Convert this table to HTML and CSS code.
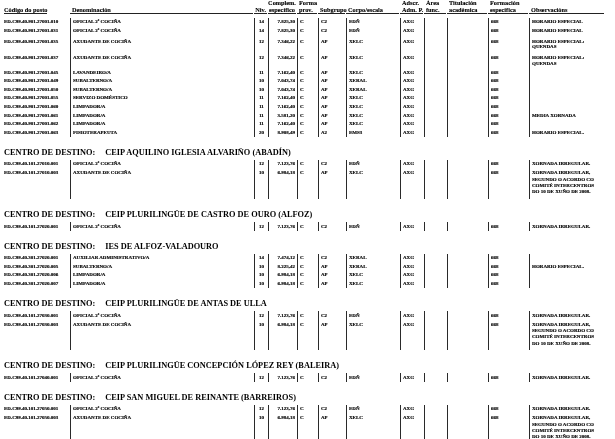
FILE: index.html
```html
<!DOCTYPE html>
<html lang="gl">
<head>
<meta charset="utf-8">
<title>Relación de postos</title>
<link rel="stylesheet" href="styles.css">
</head>
<body>
<div class="page">
  <div class="thead grid">
    <div class="th th-code">Código do posto</div>
    <div class="th">Denominación</div>
    <div class="th th-niv">Niv.</div>
    <div class="th th-center">Complem.<br>específico</div>
    <div class="th">Forma<br>prov.</div>
    <div class="th">Subgrupo</div>
    <div class="th">Corpo/escala</div>
    <div class="th">Adscr.<br>Adm. P.</div>
    <div class="th">Área<br>func.</div>
    <div class="th">Titulación<br>académica</div>
    <div class="th">Formación<br>específica</div>
    <div class="th">Observacións</div>
  </div>

  <div class="tbody">
    <div class="row grid"><div class="td">ED.C99.40.901.27001.010</div><div class="td">OFICIAL 2ª COCIÑA</div><div class="td num">14</div><div class="td amt">7.825,30</div><div class="td">C</div><div class="td">C2</div><div class="td">EDÑ</div><div class="td">AXG</div><div class="td"></div><div class="td"></div><div class="td">668</div><div class="td">HORARIO ESPECIAL</div></div>
    <div class="row grid"><div class="td">ED.C99.40.901.27001.031</div><div class="td">OFICIAL 2ª COCIÑA</div><div class="td num">14</div><div class="td amt">7.825,30</div><div class="td">C</div><div class="td">C2</div><div class="td">EDÑ</div><div class="td">AXG</div><div class="td"></div><div class="td"></div><div class="td">668</div><div class="td">HORARIO ESPECIAL</div></div>
    <div class="row grid r2"><div class="td">ED.C99.40.901.27001.035</div><div class="td">AXUDANTE DE COCIÑA</div><div class="td num">12</div><div class="td amt">7.346,22</div><div class="td">C</div><div class="td">AP</div><div class="td">XELC</div><div class="td">AXG</div><div class="td"></div><div class="td"></div><div class="td">668</div><div class="td">HORARIO ESPECIAL:<br>QUENDAS</div></div>
    <div class="row grid r2"><div class="td">ED.C99.40.901.27001.037</div><div class="td">AXUDANTE DE COCIÑA</div><div class="td num">12</div><div class="td amt">7.346,22</div><div class="td">C</div><div class="td">AP</div><div class="td">XELC</div><div class="td">AXG</div><div class="td"></div><div class="td"></div><div class="td">668</div><div class="td">HORARIO ESPECIAL:<br>QUENDAS</div></div>
    <div class="row grid"><div class="td">ED.C99.40.901.27001.045</div><div class="td">LAVANDEIRO/A</div><div class="td num">11</div><div class="td amt">7.162,40</div><div class="td">C</div><div class="td">AP</div><div class="td">XELC</div><div class="td">AXG</div><div class="td"></div><div class="td"></div><div class="td">668</div><div class="td"></div></div>
    <div class="row grid"><div class="td">ED.C99.40.901.27001.049</div><div class="td">SUBALTERNO/A</div><div class="td num">10</div><div class="td amt">7.043,74</div><div class="td">C</div><div class="td">AP</div><div class="td">XERAL</div><div class="td">AXG</div><div class="td"></div><div class="td"></div><div class="td">668</div><div class="td"></div></div>
    <div class="row grid"><div class="td">ED.C99.40.901.27001.050</div><div class="td">SUBALTERNO/A</div><div class="td num">10</div><div class="td amt">7.043,74</div><div class="td">C</div><div class="td">AP</div><div class="td">XERAL</div><div class="td">AXG</div><div class="td"></div><div class="td"></div><div class="td">668</div><div class="td"></div></div>
    <div class="row grid"><div class="td">ED.C99.40.901.27001.055</div><div class="td">SERVIZO DOMÉSTICO</div><div class="td num">11</div><div class="td amt">7.162,40</div><div class="td">C</div><div class="td">AP</div><div class="td">XELC</div><div class="td">AXG</div><div class="td"></div><div class="td"></div><div class="td">668</div><div class="td"></div></div>
    <div class="row grid"><div class="td">ED.C99.40.901.27001.060</div><div class="td">LIMPADOR/A</div><div class="td num">11</div><div class="td amt">7.162,40</div><div class="td">C</div><div class="td">AP</div><div class="td">XELC</div><div class="td">AXG</div><div class="td"></div><div class="td"></div><div class="td">668</div><div class="td"></div></div>
    <div class="row grid"><div class="td">ED.C99.40.901.27001.061</div><div class="td">LIMPADOR/A</div><div class="td num">11</div><div class="td amt">3.581,20</div><div class="td">C</div><div class="td">AP</div><div class="td">XELC</div><div class="td">AXG</div><div class="td"></div><div class="td"></div><div class="td">668</div><div class="td">MEDIA XORNADA</div></div>
    <div class="row grid"><div class="td">ED.C99.40.901.27001.062</div><div class="td">LIMPADOR/A</div><div class="td num">11</div><div class="td amt">7.162,40</div><div class="td">C</div><div class="td">AP</div><div class="td">XELC</div><div class="td">AXG</div><div class="td"></div><div class="td"></div><div class="td">668</div><div class="td"></div></div>
    <div class="row grid"><div class="td">ED.C99.40.901.27001.063</div><div class="td">FISIOTERAPEUTA</div><div class="td num">20</div><div class="td amt">8.908,49</div><div class="td">C</div><div class="td">A2</div><div class="td">EMS3</div><div class="td">AXG</div><div class="td"></div><div class="td"></div><div class="td">668</div><div class="td">HORARIO ESPECIAL.</div></div>
  </div>

  <section class="centro">
    <h2 class="centro-title"><span class="lbl">CENTRO DE DESTINO:</span><span class="name">CEIP AQUILINO IGLESIA ALVARIÑO (ABADÍN)</span></h2>
    <div class="row grid"><div class="td">ED.C99.40.101.27010.001</div><div class="td">OFICIAL 2ª COCIÑA</div><div class="td num">12</div><div class="td amt">7.123,76</div><div class="td">C</div><div class="td">C2</div><div class="td">EDÑ</div><div class="td">AXG</div><div class="td"></div><div class="td"></div><div class="td">668</div><div class="td">XORNADA IRREGULAR.</div></div>
    <div class="row grid r4"><div class="td">ED.C99.40.101.27010.003</div><div class="td">AXUDANTE DE COCIÑA</div><div class="td num">10</div><div class="td amt">6.984,18</div><div class="td">C</div><div class="td">AP</div><div class="td">XELC</div><div class="td">AXG</div><div class="td"></div><div class="td"></div><div class="td">668</div><div class="td">XORNADA IRREGULAR,<br>SEGUNDO O ACORDO CO<br>COMITÉ INTERCENTROS<br>DO 10 DE XUÑO DE 2008.</div></div>
  </section>

  <section class="centro">
    <h2 class="centro-title"><span class="lbl">CENTRO DE DESTINO:</span><span class="name">CEIP PLURILINGÜE DE CASTRO DE OURO (ALFOZ)</span></h2>
    <div class="row grid"><div class="td">ED.C99.40.101.27020.001</div><div class="td">OFICIAL 2ª COCIÑA</div><div class="td num">12</div><div class="td amt">7.123,76</div><div class="td">C</div><div class="td">C2</div><div class="td">EDÑ</div><div class="td">AXG</div><div class="td"></div><div class="td"></div><div class="td">668</div><div class="td">XORNADA IRREGULAR.</div></div>
  </section>

  <section class="centro">
    <h2 class="centro-title"><span class="lbl">CENTRO DE DESTINO:</span><span class="name">IES DE ALFOZ-VALADOURO</span></h2>
    <div class="row grid"><div class="td">ED.C99.40.301.27020.001</div><div class="td">AUXILIAR ADMINISTRATIVO/A</div><div class="td num">14</div><div class="td amt">7.474,12</div><div class="td">C</div><div class="td">C2</div><div class="td">XERAL</div><div class="td">AXG</div><div class="td"></div><div class="td"></div><div class="td">668</div><div class="td"></div></div>
    <div class="row grid"><div class="td">ED.C99.40.301.27020.005</div><div class="td">SUBALTERNO/A</div><div class="td num">10</div><div class="td amt">8.225,42</div><div class="td">C</div><div class="td">AP</div><div class="td">XERAL</div><div class="td">AXG</div><div class="td"></div><div class="td"></div><div class="td">668</div><div class="td">HORARIO ESPECIAL.</div></div>
    <div class="row grid"><div class="td">ED.C99.40.301.27020.006</div><div class="td">LIMPADOR/A</div><div class="td num">10</div><div class="td amt">6.984,18</div><div class="td">C</div><div class="td">AP</div><div class="td">XELC</div><div class="td">AXG</div><div class="td"></div><div class="td"></div><div class="td">668</div><div class="td"></div></div>
    <div class="row grid"><div class="td">ED.C99.40.301.27020.007</div><div class="td">LIMPADOR/A</div><div class="td num">10</div><div class="td amt">6.984,18</div><div class="td">C</div><div class="td">AP</div><div class="td">XELC</div><div class="td">AXG</div><div class="td"></div><div class="td"></div><div class="td">668</div><div class="td"></div></div>
  </section>

  <section class="centro">
    <h2 class="centro-title"><span class="lbl">CENTRO DE DESTINO:</span><span class="name">CEIP PLURILINGÜE DE ANTAS DE ULLA</span></h2>
    <div class="row grid"><div class="td">ED.C99.40.101.27030.001</div><div class="td">OFICIAL 2ª COCIÑA</div><div class="td num">12</div><div class="td amt">7.123,76</div><div class="td">C</div><div class="td">C2</div><div class="td">EDÑ</div><div class="td">AXG</div><div class="td"></div><div class="td"></div><div class="td">668</div><div class="td">XORNADA IRREGULAR.</div></div>
    <div class="row grid r4"><div class="td">ED.C99.40.101.27030.003</div><div class="td">AXUDANTE DE COCIÑA</div><div class="td num">10</div><div class="td amt">6.984,18</div><div class="td">C</div><div class="td">AP</div><div class="td">XELC</div><div class="td">AXG</div><div class="td"></div><div class="td"></div><div class="td">668</div><div class="td">XORNADA IRREGULAR,<br>SEGUNDO O ACORDO CO<br>COMITÉ INTERCENTROS<br>DO 10 DE XUÑO DE 2008.</div></div>
  </section>

  <section class="centro">
    <h2 class="centro-title"><span class="lbl">CENTRO DE DESTINO:</span><span class="name">CEIP PLURILINGÜE CONCEPCIÓN LÓPEZ REY (BALEIRA)</span></h2>
    <div class="row grid"><div class="td">ED.C99.40.101.27040.001</div><div class="td">OFICIAL 2ª COCIÑA</div><div class="td num">12</div><div class="td amt">7.123,76</div><div class="td">C</div><div class="td">C2</div><div class="td">EDÑ</div><div class="td">AXG</div><div class="td"></div><div class="td"></div><div class="td">668</div><div class="td">XORNADA IRREGULAR.</div></div>
  </section>

  <section class="centro">
    <h2 class="centro-title"><span class="lbl">CENTRO DE DESTINO:</span><span class="name">CEIP SAN MIGUEL DE REINANTE (BARREIROS)</span></h2>
    <div class="row grid"><div class="td">ED.C99.40.101.27050.001</div><div class="td">OFICIAL 2ª COCIÑA</div><div class="td num">12</div><div class="td amt">7.123,76</div><div class="td">C</div><div class="td">C2</div><div class="td">EDÑ</div><div class="td">AXG</div><div class="td"></div><div class="td"></div><div class="td">668</div><div class="td">XORNADA IRREGULAR.</div></div>
    <div class="row grid r4"><div class="td">ED.C99.40.101.27050.003</div><div class="td">AXUDANTE DE COCIÑA</div><div class="td num">10</div><div class="td amt">6.984,18</div><div class="td">C</div><div class="td">AP</div><div class="td">XELC</div><div class="td">AXG</div><div class="td"></div><div class="td"></div><div class="td">668</div><div class="td">XORNADA IRREGULAR,<br>SEGUNDO O ACORDO CO<br>COMITÉ INTERCENTROS<br>DO 10 DE XUÑO DE 2008.</div></div>
  </section>
</div>
</body>
</html>
```
FILE: styles.css
```css
html, body {
  margin: 0;
  padding: 0;
  background: #ffffff;
}

body {
  font-family: "Liberation Serif", "Times New Roman", serif;
  color: #000;
  overflow: hidden;
}

.page {
  padding: 0 10px 0 4px;
  background: #ffffff;
  filter: grayscale(1);
}

.grid {
  display: grid;
  grid-template-columns: 66px 184px 14px 29px 21px 28px 54px 24px 23px 41px 41px 1fr;
}

/* header */
.thead {
  align-items: end;
}

.th {
  font-size: 6.3px;
  font-weight: bold;
  line-height: 6.6px;
  padding: 0 0 0 2px;
  margin-right: 1px;
  border-bottom: 1px solid #222;
  white-space: nowrap;
  -webkit-text-stroke: 0.1px #000;
}

.th-code {
  justify-self: start;
  padding-left: 0;
}

.th-niv {
  text-align: right;
  padding: 0 1px 0 0;
}

.th-center {
  text-align: center;
  padding: 0;
}

.tbody {
  margin-top: 3.6px;
}

/* data rows */
.td {
  font-size: 5px;
  font-weight: bold;
  line-height: 5.6px;
  padding: 1.5px 1px 1.5px 2px;
  border-left: 1px solid #2a2a2a;
  white-space: nowrap;
  -webkit-text-stroke: 0.15px #000;
}

.td:first-child {
  border-left: none;
  padding-left: 0;
}

.td.num {
  text-align: center;
  padding-left: 0;
  padding-right: 0;
}

.td.amt {
  text-align: right;
  padding-right: 2px;
}

.r2 .td {
  padding-top: 3.6px;
  padding-bottom: 1.8px;
}

.r4 .td {
  padding-top: 2px;
  padding-bottom: 3.4px;
  line-height: 6.3px;
}

/* centre headings */
.centro {
  margin-top: 11px;
}

.centro-title {
  margin: 0;
  padding: 0 0 2px 0;
  font-size: 8.3px;
  line-height: 10px;
  font-weight: bold;
  white-space: nowrap;
}

.centro-title .name {
  margin-left: 10px;
}
```
